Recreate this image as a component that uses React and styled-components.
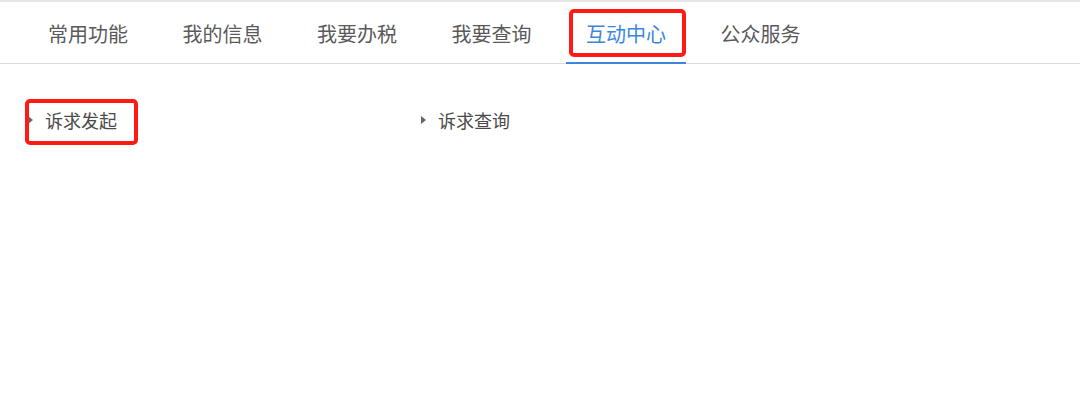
import styled, { createGlobalStyle } from "styled-components";

const GlobalStyle = createGlobalStyle`
  html, body {
    margin: 0;
    padding: 0;
    background: #fff;
  }
  body {
    font-family: "Noto Sans CJK SC", "Liberation Sans", sans-serif;
  }
`;

const tabs = ["常用功能", "我的信息", "我要办税", "我要查询", "互动中心", "公众服务"];
const items = ["诉求发起", "诉求查询"];

const App = () => {
  const active = 4;
  return (
    <Page>
      <GlobalStyle />
      <TabBar>
        {tabs.map((t, i) => (
          <Tab key={t} $active={i === active}>
            {t}
            {i === active ? <Mark $top={7} $left={3} $right={0} $bottom={5} /> : null}
          </Tab>
        ))}
      </TabBar>
      <Content>
        {items.map((t, i) => (
          <Item key={t}>
            <Arrow />
            {t}
            {i === 0 ? <Mark $top={-9} $left={-3} $right={-21} $bottom={-13} /> : null}
          </Item>
        ))}
      </Content>
    </Page>
  );
};

const Page = styled.div`
  border-top: 2px solid #e6e6e6;
  height: 407px;
  background: #fff;
`;

const TabBar = styled.div`
  display: flex;
  gap: 14.5px;
  padding-left: 28px;
  height: 61px;
  border-bottom: 1px solid #dcdcdc;
`;

const Tab = styled.div`
  position: relative;
  display: flex;
  align-items: center;
  padding: 0 20px;
  font-size: 20px;
  color: ${(p) => (p.$active ? "#3b87e0" : "#5a5a5a")};
  border-bottom: 2px solid ${(p) => (p.$active ? "#3b87e0" : "transparent")};
  margin-bottom: -1px;
  padding-top: 3px;
`;

const Mark = styled.span`
  position: absolute;
  top: ${(p) => p.$top}px;
  left: ${(p) => p.$left}px;
  right: ${(p) => p.$right}px;
  bottom: ${(p) => p.$bottom}px;
  border: 4px solid #ff1a14;
  border-radius: 5px;
  pointer-events: none;
`;

const Content = styled.div`
  display: grid;
  grid-template-columns: 393px 393px;
  padding: 44px 0 0 28px;
`;

const Item = styled.div`
  position: relative;
  display: flex;
  align-items: center;
  height: 24px;
  font-size: 18px;
  color: #4a4a4a;
  justify-self: start;
`;

const Arrow = styled.span`
  width: 0;
  height: 0;
  border-top: 4px solid transparent;
  border-bottom: 4px solid transparent;
  border-left: 5px solid #666;
  margin-right: 12px;
`;

export default App;
